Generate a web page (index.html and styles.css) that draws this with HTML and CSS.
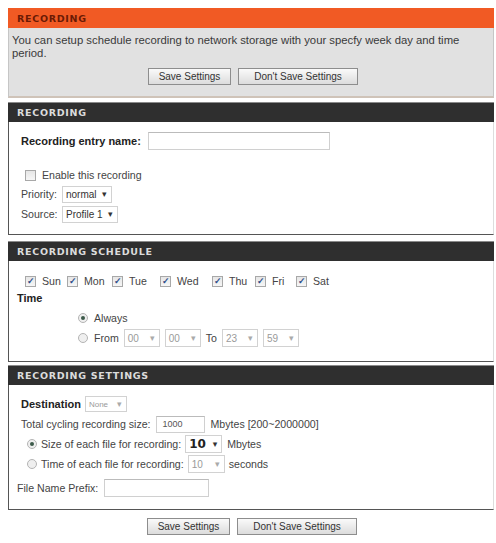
FILE: index.html
```html
<!DOCTYPE html>
<html>
<head>
<meta charset="utf-8">
<link rel="stylesheet" href="styles.css">
</head>
<body>
<div class="page">
  <div class="intro">
    <div class="orange-bar">RECORDING</div>
    <div class="intro-box">
      <p class="intro-text">You can setup schedule recording to network storage with your specfy week day and time period.</p>
      <div class="btn-row">
        <span class="btn btn-save">Save Settings</span>
        <span class="btn btn-dont">Don't Save Settings</span>
      </div>
    </div>
  </div>

  <div class="section sec-rec">
    <div class="dark-bar">RECORDING</div>
    <div class="panel">
      <div class="row row-entry"><span class="label-bold">Recording entry name:</span><span class="input input-entry"></span></div>
      <div class="row row-enable"><span class="cb"></span><span class="txt">Enable this recording</span></div>
      <div class="row"><span class="txt lbl-pr">Priority:</span><span class="select sel-prio">normal<span class="arrow">▾</span></span></div>
      <div class="row"><span class="txt lbl-pr">Source:</span><span class="select sel-src">Profile 1<span class="arrow">▾</span></span></div>
    </div>
  </div>

  <div class="section sec-sched">
    <div class="dark-bar">RECORDING SCHEDULE</div>
    <div class="panel">
      <div class="row row-days">
        <span class="day"><span class="cb on">✓</span><span class="txt">Sun</span></span>
        <span class="day"><span class="cb on">✓</span><span class="txt">Mon</span></span>
        <span class="day"><span class="cb on">✓</span><span class="txt">Tue</span></span>
        <span class="day"><span class="cb on">✓</span><span class="txt">Wed</span></span>
        <span class="day"><span class="cb on">✓</span><span class="txt">Thu</span></span>
        <span class="day"><span class="cb on">✓</span><span class="txt">Fri</span></span>
        <span class="day"><span class="cb on">✓</span><span class="txt">Sat</span></span>
      </div>
      <div class="row row-time"><span class="label-bold">Time</span></div>
      <div class="row row-ind row-always"><span class="radio on"></span><span class="txt">Always</span></div>
      <div class="row row-ind row-from">
        <span class="radio"></span><span class="txt">From</span>
        <span class="select dis sel-t">00<span class="arrow">▾</span></span>
        <span class="select dis sel-t">00<span class="arrow">▾</span></span>
        <span class="txt to">To</span>
        <span class="select dis sel-t">23<span class="arrow">▾</span></span>
        <span class="select dis sel-t">59<span class="arrow">▾</span></span>
      </div>
    </div>
  </div>

  <div class="section sec-set">
    <div class="dark-bar">RECORDING SETTINGS</div>
    <div class="panel">
      <div class="row"><span class="label-bold">Destination</span><span class="select dis sel-dest">None<span class="arrow">▾</span></span></div>
      <div class="row"><span class="txt">Total cycling recording size:</span><span class="input input-size">1000</span><span class="txt">Mbytes [200~2000000]</span></div>
      <div class="row row-r"><span class="radio on"></span><span class="txt">Size of each file for recording:</span><span class="select sel-big">10<span class="arrow">▾</span></span><span class="txt after-big">Mbytes</span></div>
      <div class="row row-r"><span class="radio"></span><span class="txt">Time of each file for recording:</span><span class="select dis sel-time">10<span class="arrow">▾</span></span><span class="txt">seconds</span></div>
      <div class="row row-prefix"><span class="txt">File Name Prefix:</span><span class="input input-prefix"></span></div>
    </div>
  </div>

  <div class="btn-row bottom-btns">
    <span class="btn btn-save">Save Settings</span>
    <span class="btn btn-dont">Don't Save Settings</span>
  </div>
</div>
</body>
</html>
```

FILE: styles.css
```css
html, body {
  margin: 0;
  padding: 0;
  background: #ffffff;
}
body {
  padding: 8px 2px 0 8px;
  font-family: "Liberation Sans", Arial, sans-serif;
  font-size: 10.6px;
  color: #444;
}
.page {
  width: 486px;
}
.orange-bar {
  height: 20px;
  background: #f15a24;
  color: #6b1a05;
  font-family: "DejaVu Sans", sans-serif;
  font-weight: bold;
  font-size: 9.5px;
  letter-spacing: 0.7px;
  line-height: 21px;
  padding-left: 9px;
}
.intro-box {
  height: 68px;
  background: #e1e1e1;
  border: 1px solid #c6c6c6;
  border-top: none;
  border-bottom: 2px solid #cfc3b8;
}
.intro-text {
  margin: 0;
  padding: 6px 6px 0 3px;
  line-height: 13px;
  font-size: 11.3px;
  color: #3a3a3a;
}
.btn-row {
  display: flex;
  justify-content: flex-start;
  gap: 7px;
  padding-left: 139px;
  margin-top: 8px;
}
.btn {
  display: inline-flex;
  align-items: center;
  justify-content: center;
  height: 15px;
  border: 1px solid #8d8d8d;
  background: linear-gradient(#fafafa, #dcdcdc);
  font-size: 10px;
  color: #333;
  box-sizing: content-box;
}
.btn-save { width: 81px; }
.btn-dont { width: 118px; }

.section { margin-top: 5px; }
.sec-rec { margin-top: 4px; }
.sec-sched { margin-top: 6px; }
.sec-set { margin-top: 3px; }

.dark-bar {
  height: 19px;
  background: #2f2f2f;
  border-top: 1px solid #8a8a8a;
  color: #dcdcdc;
  font-family: "DejaVu Sans", sans-serif;
  font-weight: bold;
  font-size: 9.5px;
  letter-spacing: 0.7px;
  line-height: 19px;
  padding-left: 9px;
}
.panel {
  border: 1px solid #555;
  border-top: none;
  border-right-color: #ddd;
  background: #fff;
  padding-left: 12px;
}
.row {
  display: flex;
  align-items: center;
  height: 20px;
  white-space: nowrap;
}
.txt { color: #444; }
.label-bold {
  font-weight: bold;
  color: #222;
  font-size: 11px;
}
.input {
  display: inline-flex;
  align-items: center;
  height: 17px;
  border: 1px solid #d0d0d0;
  border-top-color: #bbb;
  background: #fff;
  font-size: 9px;
  color: #555;
  padding-left: 6px;
  box-sizing: border-box;
}
.select {
  display: inline-flex;
  align-items: center;
  height: 17px;
  border: 1px solid #d2d2d2;
  background: #fff;
  font-size: 10px;
  color: #333;
  padding-left: 3px;
  box-sizing: border-box;
}
.select .arrow {
  margin-left: auto;
  margin-right: 4px;
  font-size: 9px;
  color: #333;
}
.select.dis { color: #9a9a9a; }
.select.dis .arrow { color: #aaa; }

.cb {
  display: inline-flex;
  align-items: center;
  justify-content: center;
  flex: none;
  width: 9px;
  height: 9px;
  border: 1px solid #a8a8a8;
  background: linear-gradient(#e6e6e6, #f6f6f6);
  font-size: 9px;
  line-height: 9px;
  color: #2d4e8a;
  font-weight: bold;
}
.radio {
  display: inline-block;
  flex: none;
  width: 8px;
  height: 8px;
  border: 1px solid #b4b4b4;
  border-radius: 50%;
  background: #efefef;
  position: relative;
}
.radio.on::after {
  content: "";
  position: absolute;
  left: 2px;
  top: 2px;
  width: 4px;
  height: 4px;
  border-radius: 50%;
  background: #3c5a4a;
}

/* section 1 */
.sec-rec .panel { padding-top: 9px; padding-bottom: 10px; padding-left: 12px; }
.row-entry { height: 20px; }
.input-entry { width: 182px; height: 18px; margin-left: 7px; }
.row-enable { margin-top: 15px; height: 18px; padding-left: 4px; }
.row-enable .txt { margin-left: 6px; }
.lbl-pr { width: 41px; }
.sel-prio { width: 50px; }
.sel-src { width: 56px; }

/* schedule */
.sec-sched .panel { padding-top: 11px; padding-bottom: 13px; padding-left: 8px; }
.row-days { height: 18px; padding-left: 8px; }
.day { display: inline-flex; align-items: center; }
.day .txt { margin-left: 6px; }
.day:nth-child(1) { width: 42px; }
.day:nth-child(2) { width: 45px; }
.day:nth-child(3) { width: 48px; }
.day:nth-child(4) { width: 52px; }
.day:nth-child(5) { width: 43px; }
.day:nth-child(6) { width: 41px; }
.row-time { height: 16px; }
.row-ind { padding-left: 61px; }
.row-always { height: 18px; margin-top: 3px; }
.row-from { height: 20px; margin-top: 1px; }
.row-ind .txt { margin-left: 6px; }
.row-from .select { margin-left: 5px; }
.row-from .to { margin-left: 5px; }
.sel-t { width: 36px; height: 18px; }

/* settings */
.sec-set .panel { padding-top: 9px; padding-bottom: 11px; padding-left: 12px; }
.sec-set .row { height: 20px; }
.sel-dest { width: 42px; margin-left: 4px; height: 16px; font-size: 8px; }
.input-size { width: 49px; margin-left: 5px; margin-right: 6px; }
.row-r { padding-left: 6px; }
.row-r .txt { margin-left: 4px; }
.sel-big { width: 37px; margin-left: 4px; font-weight: bold; font-size: 12px; color: #222; font-family: "DejaVu Sans", sans-serif; height: 18px; }
.row-r .after-big { margin-left: 5px; }
.sel-time { width: 37px; margin-left: 4px; height: 18px; }
.sel-time + .txt { margin-left: 4px; }
.row-prefix { margin-top: 4px; margin-left: -4px; }
.input-prefix { width: 105px; margin-left: 6px; height: 18px; }

.bottom-btns { margin-top: 8px; }
```
